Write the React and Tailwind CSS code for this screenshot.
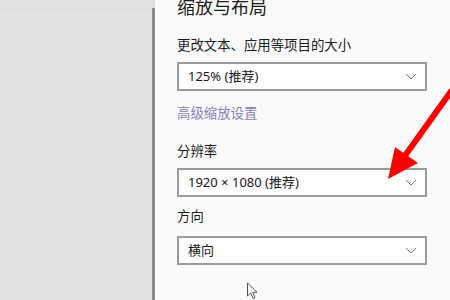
import React from "react";

function Chevron() {
  return (
    <svg width="12" height="7" viewBox="0 0 12 7" className="shrink-0">
      <path d="M1 1 L6 6 L11 1" fill="none" stroke="#7a7a7a" strokeWidth="1" />
    </svg>
  );
}

function Select({ children }) {
  return (
    <div className="flex h-[29px] w-[250px] items-center justify-between border-2 border-[#9b9b9b] bg-[#fdfdfd] pl-[9px] pr-[8px] text-[13px] text-[#1a1a1a]">
      <span className="leading-none">{children}</span>
      <Chevron />
    </div>
  );
}

export default function App() {
  return (
    <div
      className="relative flex h-[300px] w-[450px] overflow-hidden bg-[#fafafa]"
      style={{ fontFamily: '"Noto Sans", "Noto Sans CJK SC", sans-serif' }}
    >
      <div className="flex w-[152px] shrink-0 flex-col bg-[#e1e1e1]">
        <div className="mt-[14px] h-px bg-[#e9e9e9]" />
      </div>
      <div className="flex w-[3px] shrink-0 flex-col bg-[#e1e1e1]">
        <div className="mt-[8px] flex-1 bg-[#8e8e8e]" />
      </div>
      <div className="flex flex-1 flex-col pl-[22px]">
        <div className="-mt-[5px] h-[24px] text-[18px] leading-[24px] text-[#1c1c1c]">缩放与布局</div>
        <div className="mt-[17px] h-[18px] text-[13.4px] leading-[18px] text-[#1c1c1c]">更改文本、应用等项目的大小</div>
        <div className="mt-[8px]">
          <Select>125% (推荐)</Select>
        </div>
        <div className="mt-[13px] h-[18px] text-[13.4px] leading-[18px] text-[#8a7cc4]">高级缩放设置</div>
        <div className="mt-[20px] h-[18px] text-[13.4px] leading-[18px] text-[#1c1c1c]">分辨率</div>
        <div className="mt-[8px]">
          <Select>1920 × 1080 (推荐)</Select>
        </div>
        <div className="mt-[10px] h-[18px] text-[13.4px] leading-[18px] text-[#1c1c1c]">方向</div>
        <div className="mt-[11px]">
          <Select>横向</Select>
        </div>
        <div className="mt-[33px] h-[18px] text-[13.4px] leading-[18px] text-[#1c1c1c]">多显示器</div>
      </div>

      <svg className="pointer-events-none absolute left-0 top-0" width="450" height="300" viewBox="0 0 450 300">
        <line x1="452" y1="90" x2="404" y2="157" stroke="#ff0000" strokeWidth="6" />
        <polygon points="388,179 395,147 418,163" fill="#ff0000" />
      </svg>

      <svg className="pointer-events-none absolute left-[246px] top-[282px]" width="14" height="18" viewBox="0 0 14 18">
        <path d="M1.5 1 L1.5 14 L4.6 11 L7 16.5 L9 15.6 L6.7 10.3 L11 10.3 Z" fill="#ffffff" stroke="#555" strokeWidth="1" strokeLinejoin="round" />
      </svg>
    </div>
  );
}
